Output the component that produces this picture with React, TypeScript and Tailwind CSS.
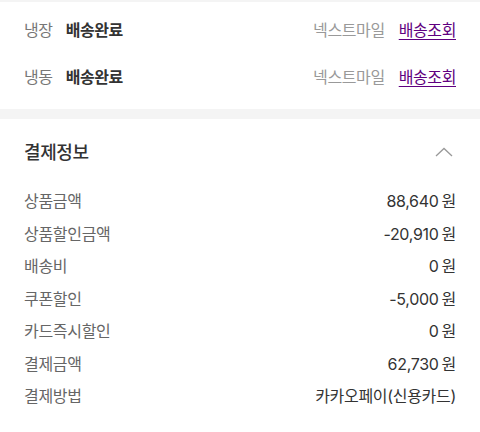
import React from "react";

const font = { fontFamily: 'Inter, "Noto Sans CJK KR", "Noto Sans", sans-serif' };

function DeliveryRow({ kind }: { kind: string }) {
  return (
    <div className="flex h-[47px] items-center justify-between px-6">
      <div className="flex items-center gap-[13px] text-[16px] tracking-[-0.4px]">
        <span className="text-[#777]">{kind}</span>
        <span className="font-bold text-[#333]">배송완료</span>
      </div>
      <div className="flex items-center gap-[14px] text-[16px] tracking-[-0.4px]">
        <span className="text-[#999]">넥스트마일</span>
        <span className="text-[#5f0080] underline underline-offset-[3px]">배송조회</span>
      </div>
    </div>
  );
}

const rows: [string, string, boolean][] = [
  ["상품금액", "88,640", true],
  ["상품할인금액", "-20,910", true],
  ["배송비", "0", true],
  ["쿠폰할인", "-5,000", true],
  ["카드즉시할인", "0", true],
  ["결제금액", "62,730", true],
  ["결제방법", "카카오페이(신용카드)", false],
];

export default function App() {
  return (
    <div className="w-[480px] h-[432px] bg-white overflow-hidden" style={font}>
      <div className="h-[2px] bg-[#f4f4f4]" />
      <div className="pt-[4px] pb-[9px]">
        <DeliveryRow kind="냉장" />
        <DeliveryRow kind="냉동" />
      </div>
      <div className="h-[10px] bg-[#f4f4f4]" />
      <div className="flex h-[66px] items-center justify-between px-6">
        <span className="text-[18px] font-medium text-[#333] tracking-[-0.4px]">결제정보</span>
        <svg width="18" height="10" viewBox="0 0 18 10" className="mr-[3px]">
          <path d="M1 9 L9 1.5 L17 9" fill="none" stroke="#999" strokeWidth="1.3" />
        </svg>
      </div>
      <div className="flex flex-col">
        {rows.map(([label, value, won]) => (
          <div key={label} className="flex h-[32.5px] items-center justify-between px-6 text-[16px] tracking-[-0.3px]">
            <span className="text-[#666]">{label}</span>
            <span className="text-[#333]">
              {value}
              {won && <span className="ml-[3px]">원</span>}
            </span>
          </div>
        ))}
      </div>
    </div>
  );
}
